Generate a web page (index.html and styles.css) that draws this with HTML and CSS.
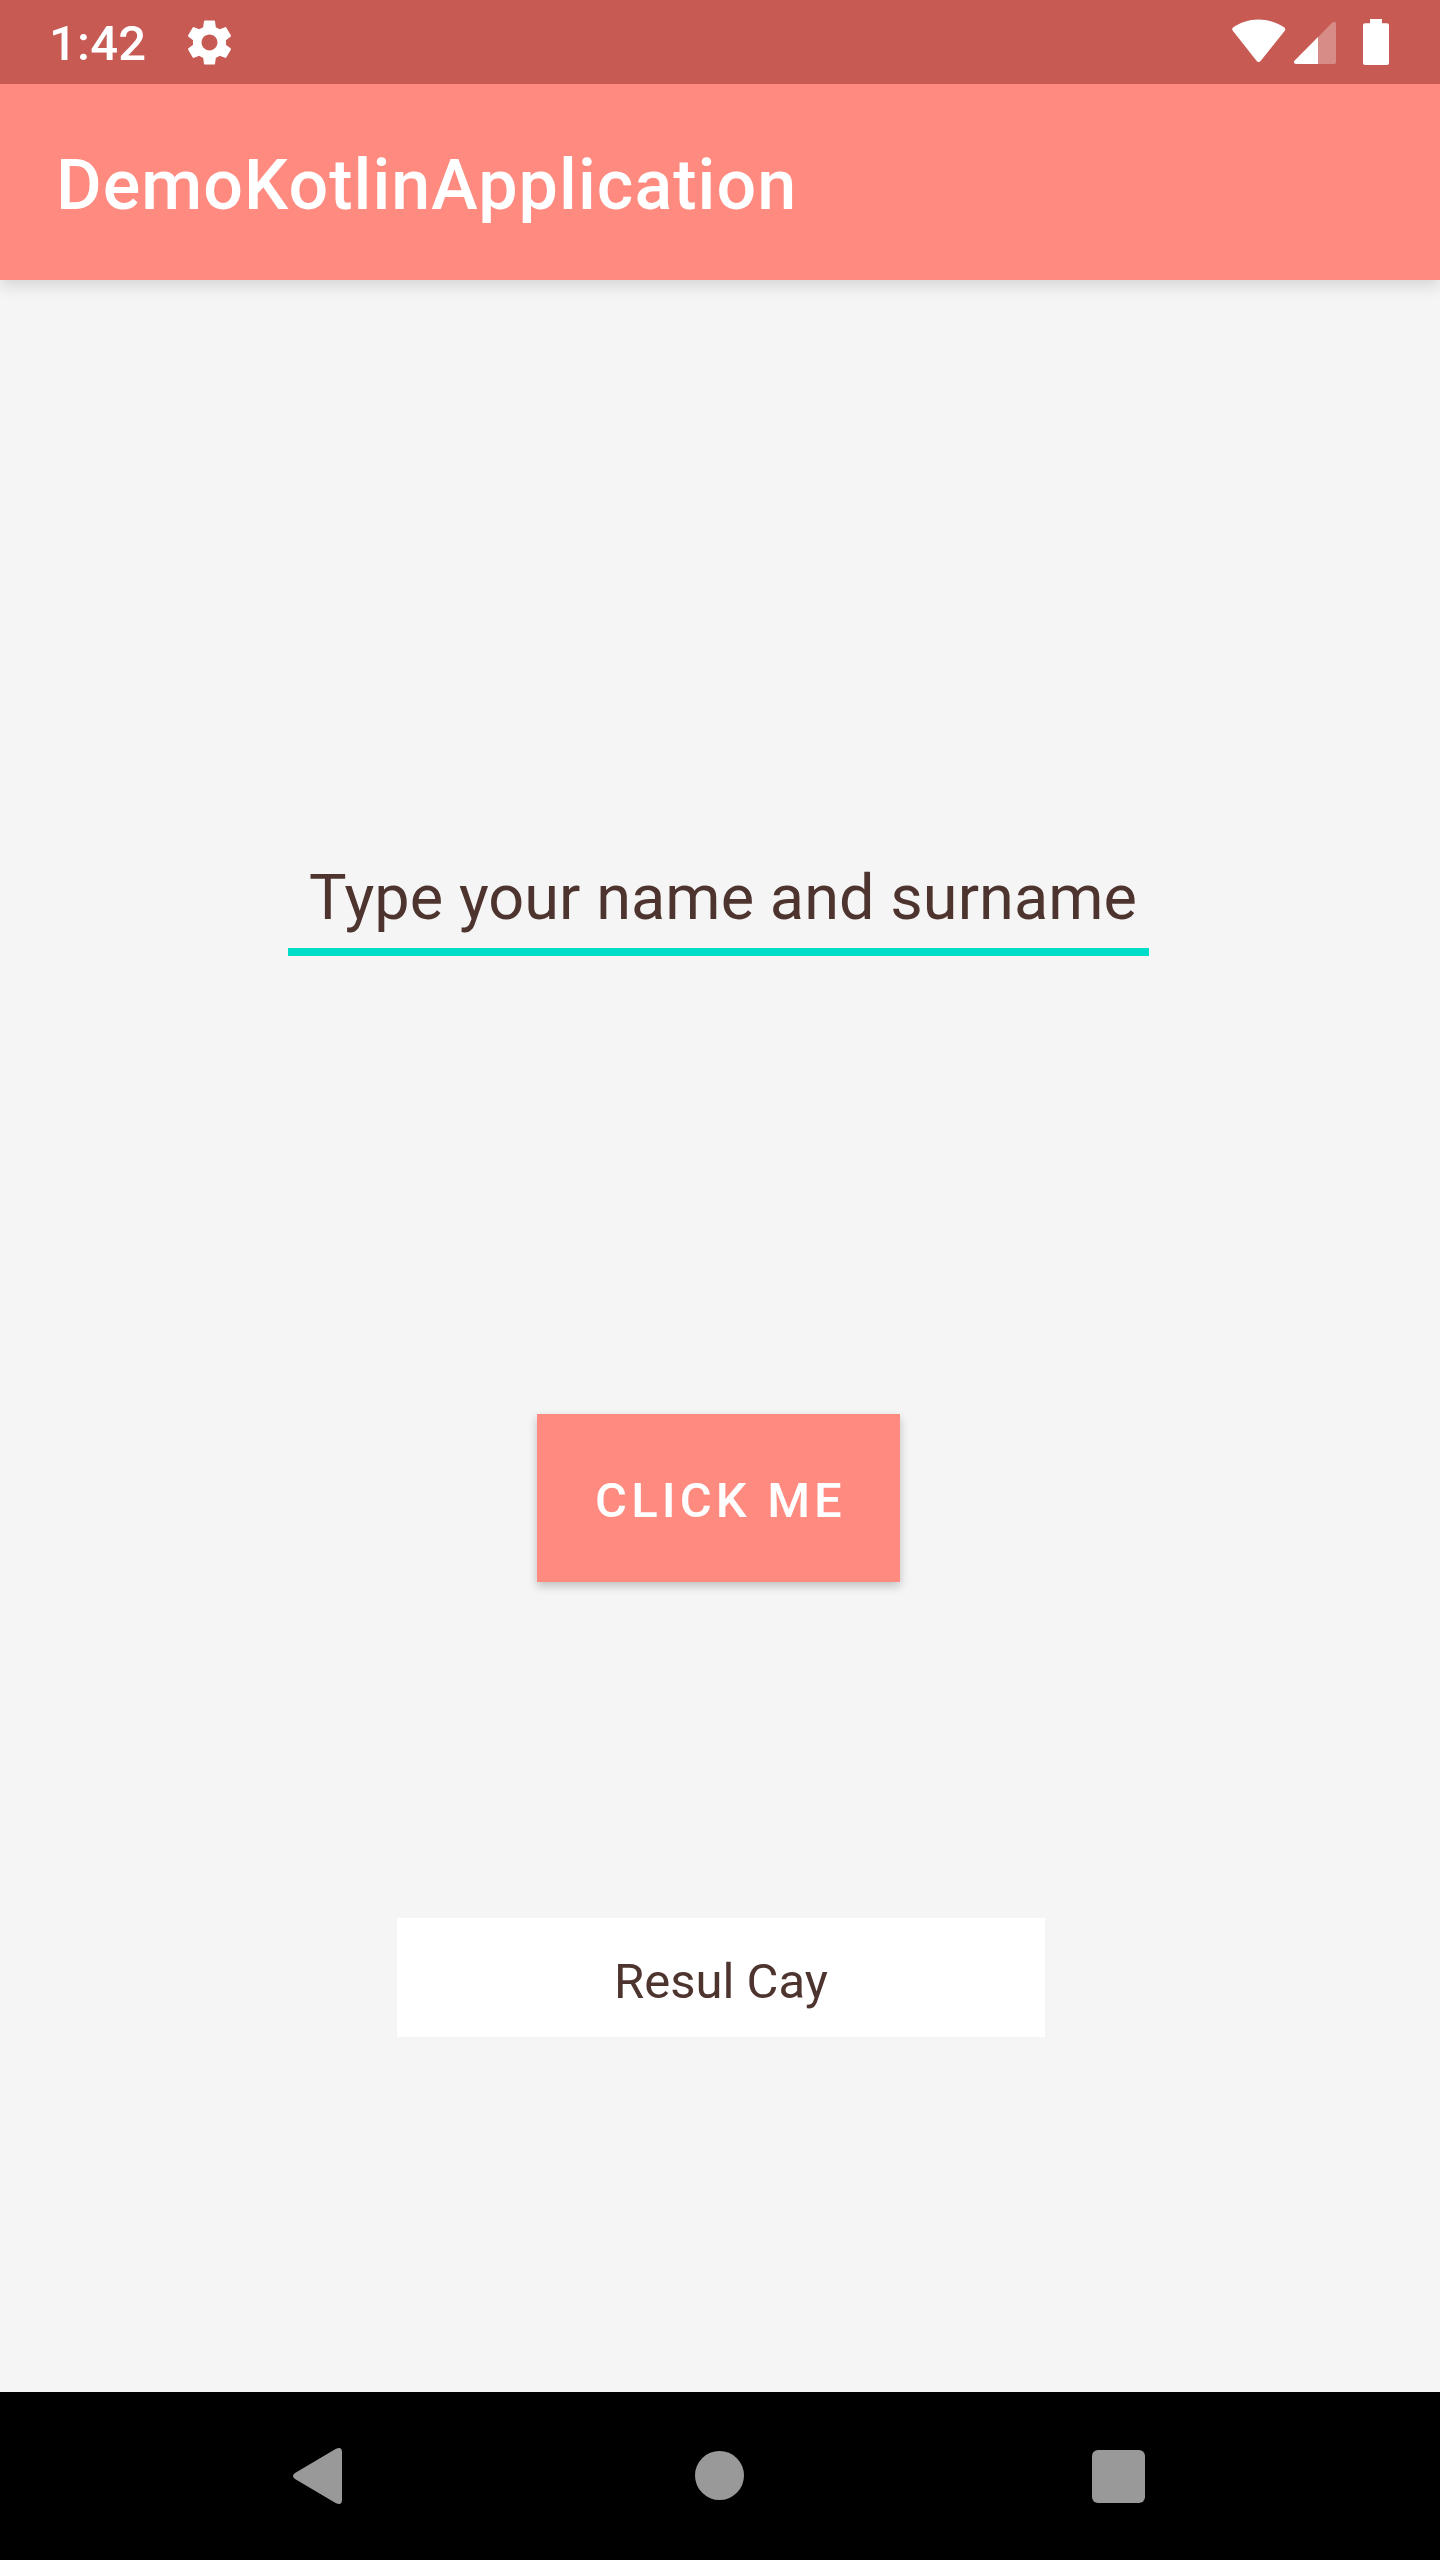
FILE: index.html
```html
<!DOCTYPE html>
<html lang="en">
<head>
<meta charset="utf-8">
<title>DemoKotlinApplication</title>
<link rel="stylesheet" href="styles.css">
</head>
<body>
<div class="screen">
  <div class="status-bar">
    <span class="clock">1:42</span>
    <svg class="gear" viewBox="0 0 24 24"><path d="M19.43 12.98c.04-.32.07-.64.07-.98s-.03-.66-.07-.98l2.11-1.65c.19-.15.24-.42.12-.64l-2-3.46c-.12-.22-.39-.3-.61-.22l-2.49 1c-.52-.4-1.08-.73-1.69-.98l-.38-2.65C14.46 2.18 14.25 2 14 2h-4c-.25 0-.46.18-.49.42l-.38 2.65c-.61.25-1.17.59-1.69.98l-2.49-1c-.23-.09-.49 0-.61.22l-2 3.46c-.13.22-.07.49.12.64l2.11 1.65c-.04.32-.07.65-.07.98s.03.66.07.98l-2.11 1.65c-.19.15-.24.42-.12.64l2 3.46c.12.22.39.3.61.22l2.49-1c.52.4 1.08.73 1.69.98l.38 2.65c.03.24.24.42.49.42h4c.25 0 .46-.18.49-.42l.38-2.65c.61-.25 1.17-.59 1.69-.98l2.49 1c.23.09.49 0 .61-.22l2-3.46c.12-.22.07-.49-.12-.64l-2.11-1.65zM12 15.6c-1.98 0-3.6-1.62-3.6-3.6s1.62-3.6 3.6-3.6 3.6 1.62 3.6 3.6-1.62 3.6-3.6 3.6z"/></svg>
    <div class="indicators">
      <svg class="wifi" viewBox="0 0 54 84"><path d="M1 31Q-.6 29.300 1 27.600C8 22.500 17 19.500 26.600 19.500S45.500 22.500 52.400 27.600Q54 29.300 52.600 31L29 60.500Q26.600 63.500 24.300 60.500Z"/></svg>
      <svg class="signal" viewBox="0 0 42 84"><path class="dim" d="M24 37.200L38.300 22.600Q42 20.500 42 24V62Q42 64 40 64H24Z"/><path d="M24 37V64H2.200Q-.6 64 .2 61Z"/></svg>
      <svg class="battery" viewBox="0 0 26 84"><path d="M7 19H19V23.300H24Q26 23.300 26 25.300V63Q26 65 24 65H2Q0 65 0 63V25.300Q0 23.300 2 23.300H7Z"/></svg>
    </div>
  </div>
  <header class="app-bar"><h1 class="title">DemoKotlinApplication</h1></header>
  <main class="content">
    <div class="name-field">Type your name and surname</div>
    <button class="click-button">CLICK ME</button>
    <div class="result">Resul Cay</div>
  </main>
  <nav class="nav-bar">
    <svg class="back" viewBox="0 0 49 56"><path d="M43 .8Q49-1.500 49 4V52Q49 57.500 43 55.200L2 31Q-2 28 2 25Z"/></svg>
    <span class="home"></span>
    <span class="recents"></span>
  </nav>
</div>
</body>
</html>
```
FILE: styles.css
```css
* { box-sizing: border-box; }
body { margin: 0; font-family: Roboto, sans-serif; }
.screen { display: flex; flex-direction: column; width: 1440px; height: 2560px; background: #f5f5f5; }
.status-bar { position: relative; z-index: 1; display: flex; align-items: center; height: 84px; padding: 0 51px 0 49px; background: #c75b54; color: #fff; flex: none; }
.status-bar svg { fill: #fff; flex: none; }
.clock { font-size: 49px; font-weight: 500; line-height: 84px; padding-top: 4px; width: 134px; letter-spacing: .2px; }
.gear { width: 53px; height: 53px; }
.indicators { display: flex; margin-left: auto; }
.indicators svg { height: 84px; }
.wifi { width: 54px; margin-right: 8px; }
.signal { width: 42px; margin-right: 27px; }
.battery { width: 26px; }
.status-bar .dim { fill-opacity: .3; }
.app-bar { display: flex; align-items: center; flex: none; height: 196px; padding: 5px 56px 0; background: #ff8a80; color: #fff; box-shadow: 0 5px 16px rgba(0, 0, 0, .14); }
.title { margin: 0; font-size: 70px; font-weight: 500; line-height: 82px; letter-spacing: 1.05px; }
.content { display: flex; flex-direction: column; flex: 1; align-items: center; padding-top: 560px; }
.name-field { width: 861px; height: 116px; padding: 21px 0 0 21px; margin-right: 3px; border-bottom: 8px solid #00dec9; color: #4e342e; font-size: 63px; line-height: 74px; letter-spacing: .06px; white-space: nowrap; }
.click-button { width: 363px; height: 168px; margin: 458px 3px 0 0; padding: 6px 0 0 4px; border: 0; background: #ff8a80; color: #fff; font: 500 49px/58px Roboto, sans-serif; letter-spacing: 4.1px; box-shadow: 0 4px 9px rgba(0, 0, 0, .22); }
.result { width: 648px; height: 119px; margin-top: 336px; margin-left: 2px; padding-top: 35px; background: #fff; color: #4e342e; font-size: 49px; line-height: 58px; text-align: center; }
.nav-bar { display: flex; align-items: center; flex: none; height: 168px; padding-left: 293px; background: #000; }
.back { width: 49px; height: 56px; fill: #999; }
.home { width: 49px; height: 49px; margin: 0 0 1px 353px; border-radius: 50%; background: #999; }
.recents { width: 53px; height: 53px; margin: 0 0 0 348px; border-radius: 6px; background: #999; }
```
